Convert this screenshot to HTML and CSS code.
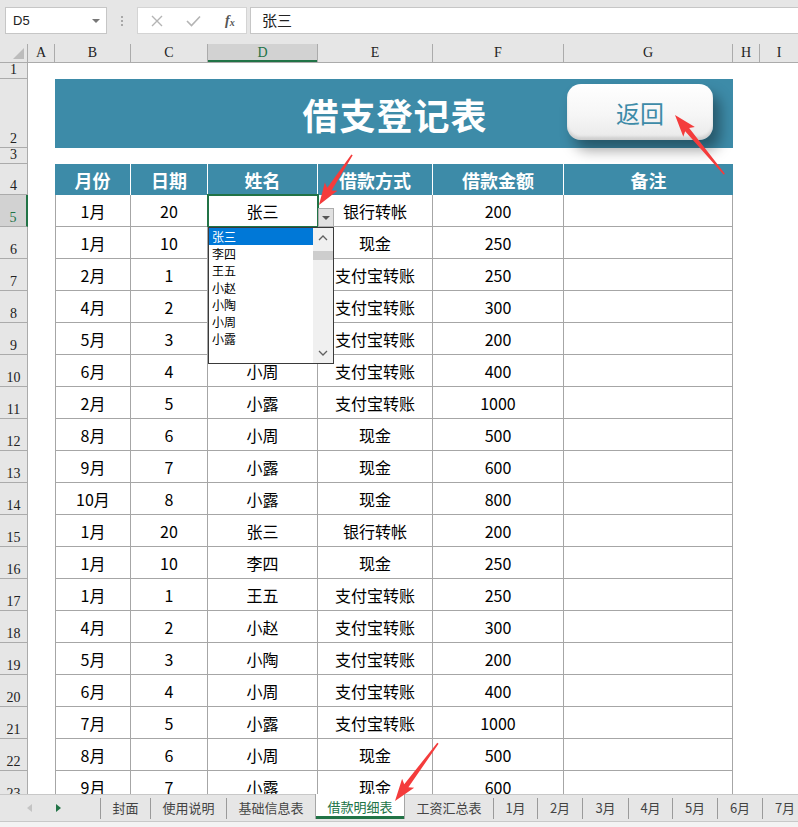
FILE: index.html
```html
<!DOCTYPE html>
<html lang="zh">
<head>
<meta charset="utf-8">
<title>借支登记表</title>
<link rel="stylesheet" href="styles.css">
</head>
<body>
<div class="app">
  <div class="fbar">
    <div class="namebox"><span>D5</span><i class="nb-tri"></i></div>
    <div class="dots"><i></i><i></i><i></i></div>
    <div class="fxbox">
      <svg class="ic-x" width="12" height="12" viewBox="0 0 12 12"><path d="M1 1 L11 11 M11 1 L1 11" stroke="#b4b4b4" stroke-width="1.4" fill="none"/></svg>
      <svg class="ic-ok" width="15" height="12" viewBox="0 0 15 12"><path d="M1 6 L5.5 10.5 L14 1.5" stroke="#b4b4b4" stroke-width="1.6" fill="none"/></svg>
      <span class="fx">f<sub>x</sub></span>
    </div>
    <div class="finput">张三</div>
  </div>

  <div class="sheet">
    <div class="row colhdr">
      <div class="corner"><i></i></div>
      <div class="ch">A</div><div class="ch">B</div><div class="ch">C</div><div class="ch sel">D</div><div class="ch">E</div><div class="ch">F</div><div class="ch">G</div><div class="ch">H</div><div class="ch last">I</div>
    </div>
    <div class="row r16"><div class="rh">1</div></div>
    <div class="row r69"><div class="rh">2</div><div></div><div class="title">借支登记表</div></div>
    <div class="row r16"><div class="rh">3</div></div>
    <div class="row r31"><div class="rh">4</div><div></div>
      <div class="hc">月份</div><div class="hc">日期</div><div class="hc">姓名</div><div class="hc">借款方式</div><div class="hc">借款金额</div><div class="hc last">备注</div>
    </div>
    <div class="row r32"><div class="rh sel">5</div><div></div><div class="t b">1月</div><div class="t">20</div><div class="t selcell">张三</div><div class="t">银行转帐</div><div class="t">200</div><div class="t"></div></div>
    <div class="row r32"><div class="rh">6</div><div></div><div class="t b">1月</div><div class="t">10</div><div class="t">李四</div><div class="t">现金</div><div class="t">250</div><div class="t"></div></div>
    <div class="row r32"><div class="rh">7</div><div></div><div class="t b">2月</div><div class="t">1</div><div class="t">王五</div><div class="t">支付宝转账</div><div class="t">250</div><div class="t"></div></div>
    <div class="row r32"><div class="rh">8</div><div></div><div class="t b">4月</div><div class="t">2</div><div class="t">小赵</div><div class="t">支付宝转账</div><div class="t">300</div><div class="t"></div></div>
    <div class="row r32"><div class="rh">9</div><div></div><div class="t b">5月</div><div class="t">3</div><div class="t">小陶</div><div class="t">支付宝转账</div><div class="t">200</div><div class="t"></div></div>
    <div class="row r32"><div class="rh">10</div><div></div><div class="t b">6月</div><div class="t">4</div><div class="t">小周</div><div class="t">支付宝转账</div><div class="t">400</div><div class="t"></div></div>
    <div class="row r32"><div class="rh">11</div><div></div><div class="t b">2月</div><div class="t">5</div><div class="t">小露</div><div class="t">支付宝转账</div><div class="t">1000</div><div class="t"></div></div>
    <div class="row r32"><div class="rh">12</div><div></div><div class="t b">8月</div><div class="t">6</div><div class="t">小周</div><div class="t">现金</div><div class="t">500</div><div class="t"></div></div>
    <div class="row r32"><div class="rh">13</div><div></div><div class="t b">9月</div><div class="t">7</div><div class="t">小露</div><div class="t">现金</div><div class="t">600</div><div class="t"></div></div>
    <div class="row r32"><div class="rh">14</div><div></div><div class="t b">10月</div><div class="t">8</div><div class="t">小露</div><div class="t">现金</div><div class="t">800</div><div class="t"></div></div>
    <div class="row r32"><div class="rh">15</div><div></div><div class="t b">1月</div><div class="t">20</div><div class="t">张三</div><div class="t">银行转帐</div><div class="t">200</div><div class="t"></div></div>
    <div class="row r32"><div class="rh">16</div><div></div><div class="t b">1月</div><div class="t">10</div><div class="t">李四</div><div class="t">现金</div><div class="t">250</div><div class="t"></div></div>
    <div class="row r32"><div class="rh">17</div><div></div><div class="t b">1月</div><div class="t">1</div><div class="t">王五</div><div class="t">支付宝转账</div><div class="t">250</div><div class="t"></div></div>
    <div class="row r32"><div class="rh">18</div><div></div><div class="t b">4月</div><div class="t">2</div><div class="t">小赵</div><div class="t">支付宝转账</div><div class="t">300</div><div class="t"></div></div>
    <div class="row r32"><div class="rh">19</div><div></div><div class="t b">5月</div><div class="t">3</div><div class="t">小陶</div><div class="t">支付宝转账</div><div class="t">200</div><div class="t"></div></div>
    <div class="row r32"><div class="rh">20</div><div></div><div class="t b">6月</div><div class="t">4</div><div class="t">小周</div><div class="t">支付宝转账</div><div class="t">400</div><div class="t"></div></div>
    <div class="row r32"><div class="rh">21</div><div></div><div class="t b">7月</div><div class="t">5</div><div class="t">小露</div><div class="t">支付宝转账</div><div class="t">1000</div><div class="t"></div></div>
    <div class="row r32"><div class="rh">22</div><div></div><div class="t b">8月</div><div class="t">6</div><div class="t">小周</div><div class="t">现金</div><div class="t">500</div><div class="t"></div></div>
    <div class="row r32"><div class="rh">23</div><div></div><div class="t b">9月</div><div class="t">7</div><div class="t">小露</div><div class="t">现金</div><div class="t">600</div><div class="t"></div></div>
  </div>

  <div class="tabs">
    <div class="nav"><i class="tri-l"></i><i class="tri-r"></i></div>
    <i class="sep"></i>
    <div class="tab w49">封面</div><i class="sep"></i>
    <div class="tab w75">使用说明</div><i class="sep"></i>
    <div class="tab w88">基础信息表</div>
    <div class="tab active">借款明细表</div>
    <div class="tab w88">工资汇总表</div><i class="sep"></i>
    <div class="tab w43">1月</div><i class="sep"></i>
    <div class="tab w44">2月</div><i class="sep"></i>
    <div class="tab w45">3月</div><i class="sep"></i>
    <div class="tab w43">4月</div><i class="sep"></i>
    <div class="tab w44">5月</div><i class="sep"></i>
    <div class="tab w44">6月</div><i class="sep"></i>
    <div class="tab w44">7月</div>
  </div>
  <div class="status"></div>

  <div class="backbtn">返回</div>

  <div class="ddbtn"><i></i></div>
  <div class="ddlist">
    <ul class="items">
      <li class="on">张三</li>
      <li>李四</li>
      <li>王五</li>
      <li>小赵</li>
      <li>小陶</li>
      <li>小周</li>
      <li>小露</li>
    </ul>
    <div class="sbar">
      <svg width="20" height="20" viewBox="0 0 20 20"><path d="M6 12 L10 8 L14 12" stroke="#606060" stroke-width="1.3" fill="none"/></svg>
      <div class="thumb"></div>
      <div class="sfill"></div>
      <svg width="20" height="20" viewBox="0 0 20 20"><path d="M6 8 L10 12 L14 8" stroke="#606060" stroke-width="1.3" fill="none"/></svg>
    </div>
  </div>

  <svg class="arrows" width="798" height="827" viewBox="0 0 798 827">
    <g transform="translate(319,205) rotate(-56.6)"><polygon points="0,0 22,-7.5 19,-2.6 60,-0.8 60,0.8 19,2.6 22,7.5" fill="#f43c3c"/></g>
    <g transform="translate(675,115) rotate(50.2)"><polygon points="0,0 22,-7.5 19,-2.6 77,-0.8 77,0.8 19,2.6 22,7.5" fill="#f43c3c"/></g>
    <g transform="translate(395,801) rotate(-53.4)"><polygon points="0,0 22,-7.5 19,-2.6 72,-0.8 72,0.8 19,2.6 22,7.5" fill="#f43c3c"/></g>
  </svg>
</div>
</body>
</html>
```
FILE: styles.css
```css
* { box-sizing: border-box; }
body { margin: 0; font-family: "Noto Sans CJK SC", "Noto Sans", sans-serif; }
.app { width: 798px; height: 827px; position: relative; overflow: hidden; background: #fff; }

/* formula bar */
.fbar { height: 44px; background: #e6e6e6; display: flex; align-items: flex-start; padding-top: 7px; }
.namebox { margin-left: 5px; width: 102px; height: 27px; background: #fff; border: 1px solid #c6c6c6; display: flex; align-items: center; justify-content: space-between; padding: 0 6px 0 7px; font: 13px "Liberation Sans", sans-serif; color: #222; }
.nb-tri { width: 0; height: 0; border-left: 4px solid transparent; border-right: 4px solid transparent; border-top: 4px solid #777; }
.dots { width: 30px; height: 27px; display: flex; flex-direction: column; align-items: center; justify-content: center; gap: 2px; }
.dots i { width: 2px; height: 2px; background: #a8a8a8; }
.fxbox { width: 110px; height: 27px; background: #fff; border: 1px solid #d4d4d4; display: flex; align-items: center; }
.ic-x { margin-left: 13px; }
.ic-ok { margin-left: 23px; }
.fx { margin-left: 24px; font: italic bold 14px "Liberation Serif", serif; color: #555; }
.fx sub { font-size: 10px; vertical-align: -1px; }
.finput { margin-left: 3px; flex: 1; height: 27px; background: #fff; border: 1px solid #c6c6c6; border-right: none; padding-left: 11px; font-size: 15px; line-height: 24px; color: #222; }

/* sheet */
.sheet { height: 750px; overflow: hidden; }
.row { display: grid; grid-template-columns: 28px 27px 76px 77px 110px 115px 131px 169px 27px 38px; }
.colhdr { height: 19px; background: #e6e6e6; border-bottom: 1px solid #ababab; }
.corner { position: relative; border-right: 1px solid #ababab; }
.corner i { position: absolute; right: 3px; bottom: 3px; width: 0; height: 0; border-left: 11px solid transparent; border-bottom: 11px solid #bcbcbc; }
.ch { border-right: 1px solid #ababab; text-align: center; font: 14px "Liberation Serif", serif; line-height: 18px; color: #222; }
.ch.last { border-right: none; }
.ch.sel { background: #d2d2d2; color: #217346; box-shadow: inset 0 -2px 0 #217346; }
.r16 { height: 16px; }
.r69 { height: 69px; }
.r31 { height: 31px; }
.r32 { height: 32px; }
.rh { background: #e6e6e6; border-right: 1px solid #ababab; border-bottom: 1px solid #ababab; font: 14px "Liberation Serif", serif; display: flex; align-items: flex-end; justify-content: center; line-height: 14px; padding-bottom: 1px; color: #222; }
.rh.sel { background: #d2d2d2; color: #217346; border-right: 2px solid #217346; }

.title { grid-column: 3 / 9; background: #3d8ba8; color: #fff; font-size: 36px; font-weight: 700; letter-spacing: 1px; display: flex; align-items: center; justify-content: center; padding-left: 2px; }
.hc { background: #3d8ba8; color: #fff; font-weight: 700; font-size: 18px; display: flex; align-items: center; justify-content: center; border-right: 1px solid #fff; }
.hc.last { border-right: none; }
.t { border-right: 1px solid #a6a6a6; border-bottom: 1px solid #a6a6a6; display: flex; align-items: center; justify-content: center; font-size: 16px; color: #000; }
.t.b { border-left: 1px solid #a6a6a6; }
.selcell { outline: 2px solid #217346; outline-offset: -1px; }

/* tabs */
.tabs { height: 28px; background: #e6e6e6; border-top: 1px solid #c8c8c8; border-bottom: 1px solid #c8c8c8; display: flex; align-items: stretch; }
.tabs > * { flex-shrink: 0; }
.nav { width: 100px; display: flex; align-items: center; }
.tri-l { margin-left: 27px; width: 0; height: 0; border-top: 4px solid transparent; border-bottom: 4px solid transparent; border-right: 5px solid #c4c4c4; }
.tri-r { margin-left: 24px; width: 0; height: 0; border-top: 4px solid transparent; border-bottom: 4px solid transparent; border-left: 5px solid #217346; }
.sep { width: 1px; align-self: center; height: 21px; background: #9a9a9a; }
.tab { display: flex; align-items: center; justify-content: center; font-size: 13px; color: #444; padding-bottom: 1px; }
.w43 { width: 43px; } .w44 { width: 44px; } .w45 { width: 45px; } .w49 { width: 49px; } .w75 { width: 75px; } .w88 { width: 88px; }
.tab.active { width: 90px; background: #fff; color: #217346; border-left: 1px solid #a6a6a6; border-right: 1px solid #a6a6a6; margin-top: -1px; box-shadow: inset 0 -3px 0 #217346; margin-bottom: 2px; }
.status { height: 5px; background: #f3f3f3; }

/* floating shapes */
.backbtn { position: absolute; left: 567px; top: 84px; width: 146px; height: 56px; border-radius: 14px; background: linear-gradient(#ffffff, #f6f6f6 55%, #e9e9e9); box-shadow: 7px 10px 14px rgba(0,0,0,.38), inset 0 -3px 3px rgba(0,0,0,.12); color: #3d8ba8; font-size: 24px; display: flex; align-items: center; justify-content: center; }

.ddbtn { position: absolute; left: 318px; top: 208px; width: 16px; height: 19px; background: #e1e1e1; border: 1px solid #adadad; display: flex; align-items: center; justify-content: center; }
.ddbtn i { width: 0; height: 0; border-left: 4px solid transparent; border-right: 4px solid transparent; border-top: 4px solid #555; margin-top: 1px; }
.ddlist { position: absolute; left: 208px; top: 227px; width: 126px; height: 137px; border: 1px solid #3a3a3a; background: #fff; display: flex; }
.items { list-style: none; margin: 0; padding: 0; width: 104px; }
.items li { height: 17px; line-height: 17px; font-size: 12px; padding-left: 3px; color: #000; }
.items li.on { background: #0078d7; color: #fff; }
.sbar { width: 20px; background: #f0f0f0; display: flex; flex-direction: column; }
.sbar svg { display: block; }
.thumb { height: 9px; background: #cdcdcd; margin-top: 3px; }
.sfill { flex: 1; }
.arrows { position: absolute; left: 0; top: 0; pointer-events: none; }
```
